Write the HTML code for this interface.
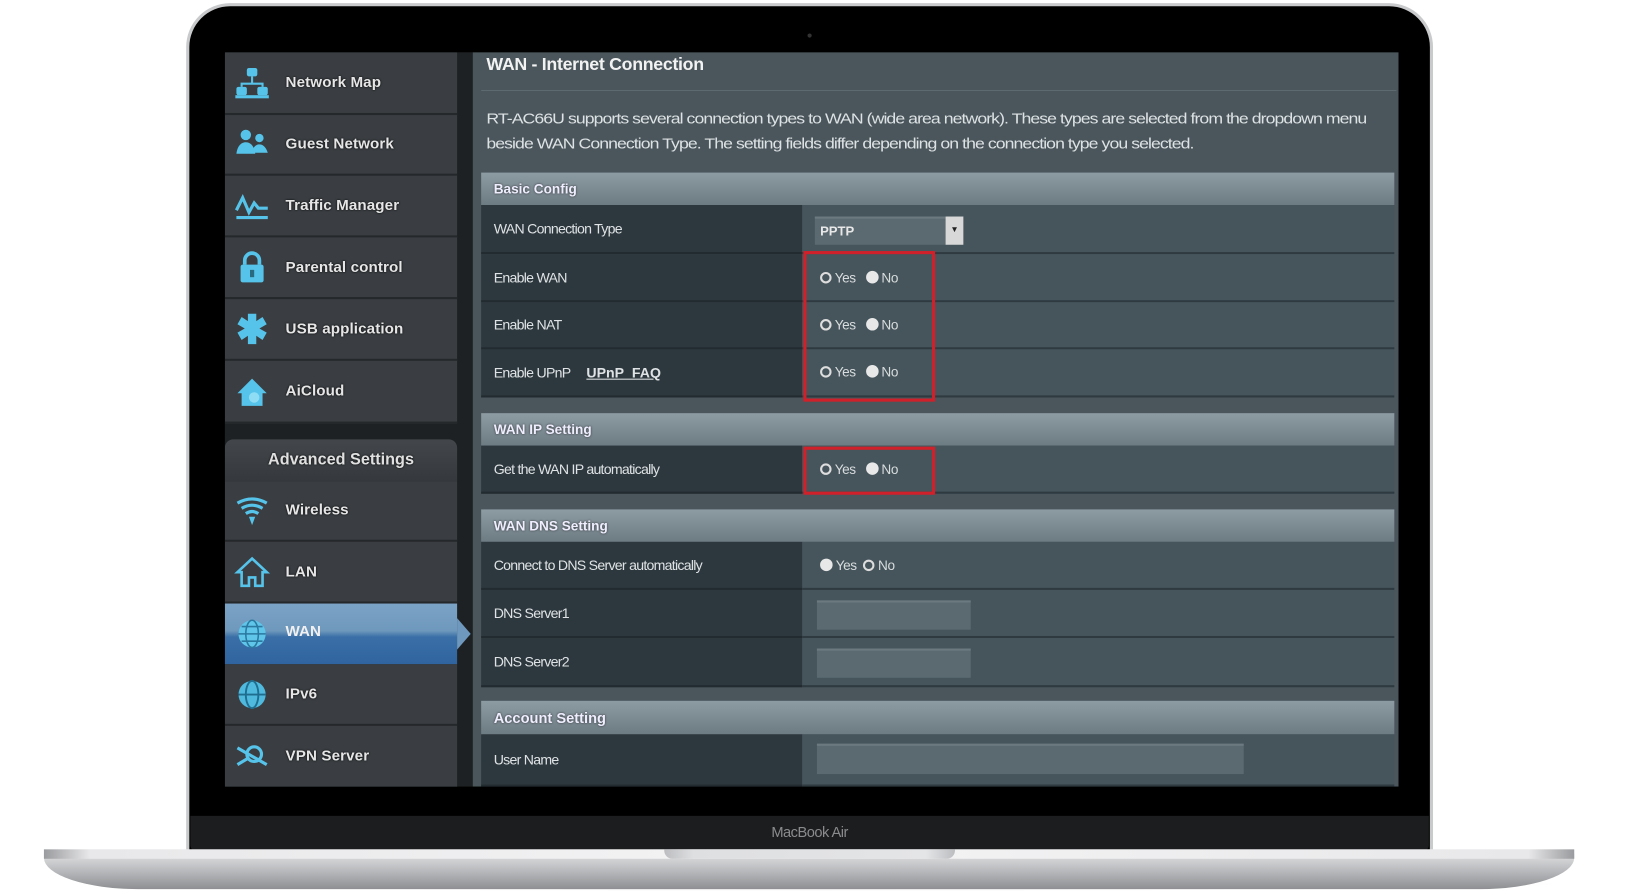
<!DOCTYPE html>
<html><head><meta charset="utf-8"><style>
*{margin:0;padding:0;box-sizing:border-box}
html,body{width:1638px;height:894px;overflow:hidden;background:#fff;font-family:"Liberation Sans",sans-serif}
#w{position:absolute;left:0;top:0;width:1560px;height:852px;transform:scale(1.046);transform-origin:0 0}
.a{position:absolute}
.side{background:#3a3e42;border-bottom:2px solid #25282b;color:#e6e6e6;font-weight:bold;font-size:14.5px;letter-spacing:.1px}
.side span{position:absolute;left:58px;top:50%;transform:translateY(-50%);text-shadow:0 0 2px #000}
.side svg{position:absolute;left:8px;top:50%;transform:translateY(-50%)}
.hd{background:linear-gradient(#8d9ba3,#6d7b83);color:#eef;font-weight:bold;font-size:13px;padding-left:12px;display:flex;align-items:center;text-shadow:0 0 2px #333}
.lb{background:#2d383e;color:#dfe3e5;font-size:13.5px;letter-spacing:-.7px;padding-left:12px;display:flex;align-items:center;border-bottom:2px solid #222b30}
.vl{background:#46555c;border-bottom:2px solid #2e3a40}
.rad{color:#d8dcdd;font-size:13px;letter-spacing:-.4px}
.o{display:inline-block;width:11px;height:11px;border:2px solid #ddd;border-radius:50%;vertical-align:-1px;margin-right:3px}
.f{display:inline-block;width:12px;height:12px;background:#e8e8e8;border-radius:50%;vertical-align:-1px;margin-right:3px}
.in{background:#5b6a71;border-top:2px solid #6c7a80}
.red{border:3px solid #d0202a}
</style></head><body><div id="w">
<div class="a" style="left:60px;top:838px;width:1440px;height:14px;background:radial-gradient(ellipse at center,rgba(0,0,0,.18),rgba(0,0,0,0) 70%)"></div>
<div class="a" style="left:178px;top:3px;width:1192px;height:815px;border-radius:42px 42px 0 0;background:#c9cacc"></div>
<div class="a" style="left:181px;top:6px;width:1186px;height:812px;border-radius:39px 39px 0 0;background:#000"></div>
<div class="a" style="left:772px;top:32px;width:4px;height:4px;border-radius:50%;background:#333"></div>
<div class="a" style="left:182px;top:780px;width:1184px;height:34px;background:#1c1d1f;border-radius:0 0 6px 6px"></div>
<div class="a" style="left:674px;top:787px;width:200px;text-align:center;color:#8a8b8d;font-size:14px;letter-spacing:-.5px">MacBook Air</div>
<div class="a" style="left:42px;top:812px;width:1463px;height:38px;border-radius:4px 4px 90px 90px / 4px 4px 30px 30px;background:linear-gradient(#f0f0f1 0%,#d2d3d5 25%,#b3b4b7 60%,#8e8f92 100%)"></div>
<div class="a" style="left:42px;top:812px;width:1463px;height:9px;background:linear-gradient(90deg,#9a9b9e,#e8e8ea 3%,#f4f4f5 50%,#e8e8ea 97%,#9a9b9e)"></div>
<div class="a" style="left:635px;top:812px;width:278px;height:9px;background:linear-gradient(90deg,#bcbdc0,#dedfe1 10%,#e4e5e7 90%,#bcbdc0);border-radius:0 0 8px 8px"></div>
<div class="a" style="left:215px;top:50px;width:1122px;height:702px;background:#1e2123;overflow:hidden">
 <div class="a side" style="left:0;top:0;width:222px;height:60px"><svg width="36" height="36" viewBox="0 0 36 36"><g fill="#56c4ea"><rect x="13" y="4" width="10" height="8" rx="2"/><rect x="3" y="22" width="10" height="8" rx="2"/><rect x="23" y="22" width="10" height="8" rx="2"/><path d="M17 12v6H7v4h2v-2h18v2h2v-4H19v-6z"/><rect x="2" y="30" width="32" height="3"/></g></svg><span>Network Map</span></div>
 <div class="a side" style="left:0;top:60px;width:222px;height:58px"><svg width="36" height="36" viewBox="0 0 36 36"><g fill="#56c4ea"><circle cx="12" cy="9" r="5"/><circle cx="25" cy="12" r="4"/><path d="M3 27c1-8 5-11 9-11s8 3 9 11z"/><path d="M18 26c1-6 4-8 7-8s6 2 8 8z"/></g></svg><span>Guest Network</span></div>
 <div class="a side" style="left:0;top:118px;width:222px;height:59px"><svg width="36" height="36" viewBox="0 0 36 36"><g fill="none" stroke="#56c4ea" stroke-width="3"><path d="M3 22l6-12 6 14 5-9 4 5h9"/><path d="M3 29h30"/></g></svg><span>Traffic Manager</span></div>
 <div class="a side" style="left:0;top:177px;width:222px;height:59px"><svg width="36" height="36" viewBox="0 0 36 36"><path d="M11 15v-4a7 7 0 0114 0v4" fill="none" stroke="#56c4ea" stroke-width="3.5"/><rect x="7" y="15" width="22" height="17" rx="2" fill="#56c4ea"/><rect x="16" y="20" width="4" height="7" fill="#2a6a80"/></svg><span>Parental control</span></div>
 <div class="a side" style="left:0;top:236px;width:222px;height:59px"><svg width="36" height="36" viewBox="0 0 36 36"><path d="M14 3h8v7l6-4 4 7-7 4 7 4-4 7-6-4v8h-8v-8l-6 4-4-7 7-4-7-4 4-7 6 4z" fill="#56c4ea"/></svg><span>USB application</span></div>
 <div class="a side" style="left:0;top:295px;width:222px;height:60px"><svg width="36" height="36" viewBox="0 0 36 36"><path d="M4 20L18 6l14 14h-4v12H8V20z" fill="#56c4ea"/><circle cx="20" cy="24" r="5" fill="#8fdcf5"/></svg><span>AiCloud</span></div>
 <div class="a" style="left:0;top:370px;width:222px;height:40px;background:linear-gradient(#43474b,#35393d);border-radius:8px 8px 0 0;color:#e0e0e0;font-weight:bold;font-size:15.5px;text-align:center;line-height:40px;text-shadow:0 0 2px #000">Advanced Settings</div>
 <div class="a side" style="left:0;top:410px;width:222px;height:58px"><svg width="36" height="36" viewBox="0 0 36 36"><g fill="none" stroke="#56c4ea" stroke-width="3"><path d="M4 11q14-8 28 0"/><path d="M8 16q10-6 20 0"/><path d="M12 21q6-4 12 0"/></g><path d="M15 24h6l-3 8z" fill="#56c4ea"/></svg><span>Wireless</span></div>
 <div class="a side" style="left:0;top:468px;width:222px;height:59px"><svg width="36" height="36" viewBox="0 0 36 36"><path d="M4 18L18 5l14 13h-4v13h-7v-8h-6v8H8V18z" fill="none" stroke="#56c4ea" stroke-width="2.5"/></svg><span>LAN</span></div>
 <div class="a" style="left:0;top:527px;width:222px;height:58px;background:linear-gradient(#7aa3c6 0%,#6f98bd 45%,#3a6fa6 55%,#2f64a0 100%)"><svg class="a" style="left:8px;top:11px" width="36" height="36" viewBox="0 0 36 36"><circle cx="18" cy="18" r="13" fill="#5fc6ea"/><g fill="none" stroke="#2b78a0" stroke-width="1.5"><ellipse cx="18" cy="18" rx="6" ry="13"/><path d="M5 18h26M8 11h20M8 25h20"/></g></svg><span class="a" style="left:58px;top:19px;color:#f0f0f0;font-weight:bold;font-size:14.5px">WAN</span></div>
 <div class="a" style="left:222px;top:541px;width:0;height:0;border-top:15px solid transparent;border-bottom:15px solid transparent;border-left:13px solid #6e98bd"></div>
 <div class="a side" style="left:0;top:585px;width:222px;height:59px"><svg width="36" height="36" viewBox="0 0 36 36"><circle cx="18" cy="18" r="13" fill="#4fb9de"/><g fill="none" stroke="#1f6e90" stroke-width="1.8"><ellipse cx="18" cy="18" rx="6" ry="13"/><path d="M5 18h26"/></g></svg><span>IPv6</span></div>
 <div class="a side" style="left:0;top:644px;width:222px;height:60px"><svg width="36" height="36" viewBox="0 0 36 36"><g fill="none" stroke="#56c4ea" stroke-width="3"><path d="M4 10l28 16M4 26l10-6"/><circle cx="20" cy="16" r="7"/></g></svg><span>VPN Server</span></div>
 <div class="a" style="left:237px;top:0;width:885px;height:702px;background:#4a565c"></div>
 <div class="a" style="left:250px;top:2px;color:#f2f2f2;font-weight:bold;font-size:17px;letter-spacing:-.3px">WAN - Internet Connection</div>
 <div class="a" style="left:245px;top:36px;width:875px;height:1px;background:#5d6a70"></div>
 <div class="a" style="left:250px;top:52px;white-space:nowrap;color:#dde2e4;font-size:14.2px;letter-spacing:-.75px;line-height:24px;transform:scaleX(1.19);transform-origin:0 0">RT-AC66U supports several connection types to WAN (wide area network). These types are selected from the dropdown menu<br>beside WAN Connection Type. The setting fields differ depending on the connection type you selected.</div>
 <div class="a hd" style="left:245px;top:115px;width:873px;height:31px">Basic Config</div>
 <div class="a lb" style="left:245px;top:146px;width:307px;height:47px">WAN Connection Type</div><div class="a vl" style="left:552px;top:146px;width:566px;height:47px"></div>
 <div class="a lb" style="left:245px;top:193px;width:307px;height:46px">Enable WAN</div><div class="a vl" style="left:552px;top:193px;width:566px;height:46px"></div>
 <div class="a lb" style="left:245px;top:239px;width:307px;height:45px">Enable NAT</div><div class="a vl" style="left:552px;top:239px;width:566px;height:45px"></div>
 <div class="a lb" style="left:245px;top:284px;width:307px;height:46px">Enable UPnP&nbsp;&nbsp;&nbsp;&nbsp;&nbsp;<u style="font-weight:bold;letter-spacing:0">UPnP&nbsp;&nbsp;FAQ</u></div><div class="a vl" style="left:552px;top:284px;width:566px;height:46px"></div>
 <div class="a in" style="left:564px;top:157px;width:125px;height:27px;color:#e8e8e8;font-weight:bold;font-size:12.5px;padding:5px 0 0 5px">PPTP</div>
 <div class="a" style="left:689px;top:157px;width:17px;height:27px;background:#d8d8d8;font-size:8px;text-align:center;line-height:25px;color:#222">▼</div>
 <div class="a hd" style="left:245px;top:345px;width:873px;height:31px">WAN IP Setting</div>
 <div class="a lb" style="left:245px;top:376px;width:307px;height:46px">Get the WAN IP automatically</div><div class="a vl" style="left:552px;top:376px;width:566px;height:46px"></div>
 <div class="a hd" style="left:245px;top:437px;width:873px;height:31px">WAN DNS Setting</div>
 <div class="a lb" style="left:245px;top:468px;width:307px;height:46px">Connect to DNS Server automatically</div><div class="a vl" style="left:552px;top:468px;width:566px;height:46px"></div>
 <div class="a lb" style="left:245px;top:514px;width:307px;height:46px">DNS Server1</div><div class="a vl" style="left:552px;top:514px;width:566px;height:46px"></div>
 <div class="a lb" style="left:245px;top:560px;width:307px;height:47px">DNS Server2</div><div class="a vl" style="left:552px;top:560px;width:566px;height:47px"></div>
 <div class="a in" style="left:566px;top:524px;width:147px;height:28px"></div>
 <div class="a in" style="left:566px;top:570px;width:147px;height:28px"></div>
 <div class="a hd" style="left:245px;top:620px;width:873px;height:32px;font-size:14px">Account Setting</div>
 <div class="a lb" style="left:245px;top:652px;width:307px;height:50px">User Name</div><div class="a vl" style="left:552px;top:652px;width:566px;height:50px"></div>
 <div class="a in" style="left:566px;top:661px;width:408px;height:29px"></div>
 <div class="a rad" style="left:569px;top:208px"><i class="o"></i>Yes&nbsp;&nbsp;&nbsp;<i class="f"></i>No</div>
 <div class="a rad" style="left:569px;top:253px"><i class="o"></i>Yes&nbsp;&nbsp;&nbsp;<i class="f"></i>No</div>
 <div class="a rad" style="left:569px;top:298px"><i class="o"></i>Yes&nbsp;&nbsp;&nbsp;<i class="f"></i>No</div>
 <div class="a rad" style="left:569px;top:391px"><i class="o"></i>Yes&nbsp;&nbsp;&nbsp;<i class="f"></i>No</div>
 <div class="a rad" style="left:569px;top:483px"><i class="f"></i>Yes&nbsp;&nbsp;<i class="o"></i>No</div>
 <div class="a red" style="left:553px;top:190px;width:126px;height:144px"></div>
 <div class="a red" style="left:553px;top:377px;width:126px;height:46px"></div>
</div>
</div></body></html>
